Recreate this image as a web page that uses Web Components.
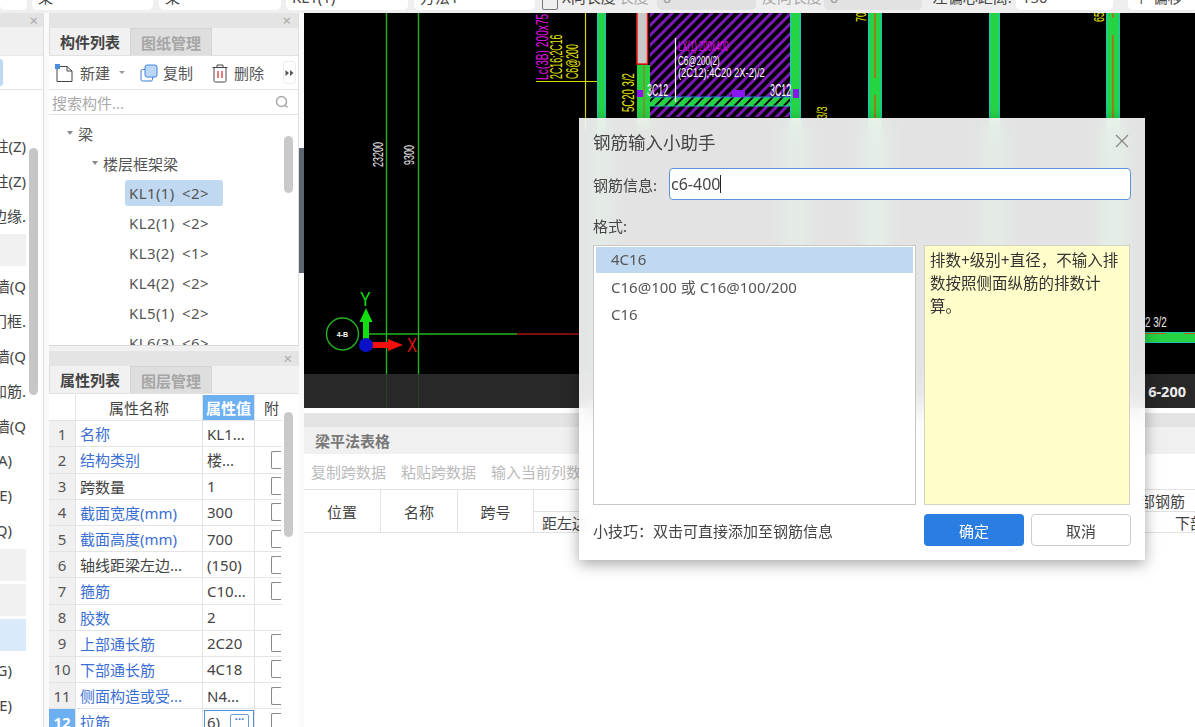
<!DOCTYPE html>
<html>
<head>
<meta charset="utf-8">
<style>
html,body{margin:0;padding:0;height:100%;overflow:hidden;background:#f1f1f1}
body{font-family:"Noto Sans","Noto Sans CJK SC",sans-serif;font-size:15px;color:#444}
</style>
</head>
<body>
<app-shell></app-shell>

<script>
const FONT = `"Noto Sans","Noto Sans CJK SC",sans-serif`

class AppShell extends HTMLElement{
    constructor(){
        super()
        const shadow = this.attachShadow({mode:"open"})
        shadow.innerHTML = `
        <style>
        :host{display:block;position:relative;width:1195px;height:727px;overflow:hidden;background:#f1f1f1;font-family:${FONT};font-size:15px}
        .main{display:grid;grid-template-columns:44px 5px 250px 5px 1fr;height:714px}
        .gap{background:#fafafa;position:relative}
        .handle{position:absolute;left:0;top:135px;width:5px;height:125px;background:#5d6670}
        .mid{display:flex;flex-direction:column;min-width:0}
        .right{display:flex;flex-direction:column;min-width:0;background:#fff}
        </style>
        <top-strip></top-strip>
        <div class="main">
            <side-list></side-list>
            <div class="gap"></div>
            <div class="mid">
                <part-panel></part-panel>
                <prop-panel></prop-panel>
            </div>
            <div class="gap"><div class="handle"></div></div>
            <div class="right">
                <cad-view></cad-view>
                <beam-table></beam-table>
            </div>
        </div>
        <rebar-dialog></rebar-dialog>
        `
    }
}

class TopStrip extends HTMLElement{
    constructor(){
        super()
        const shadow = this.attachShadow({mode:"open"})
        shadow.innerHTML = `
        <style>
        :host{display:flex;height:13px;background:#efefef;overflow:hidden;color:#444;align-items:flex-end;box-sizing:border-box;padding-bottom:3px}
        .box{background:#fff;height:22px;border-radius:0 0 5px 5px;flex:none;box-sizing:border-box;padding:0 6px 5px;display:flex;align-items:flex-end;white-space:nowrap;line-height:15px;overflow:hidden}
        .off{background:#e2e2e2;color:#999}
        .t{background:none;padding:0 0 5px}
        .chk{width:16px;height:14px;border:1px solid #777;border-radius:2px;flex:none;box-sizing:border-box}
        </style>
        <div class="box" style="width:27px"></div>
        <div class="box" style="width:121px;margin-left:5px">梁</div>
        <div class="box" style="width:122px;margin-left:6px">梁</div>
        <div class="box" style="width:122px;margin-left:5px">KL1(1)</div>
        <div class="box" style="width:121px;margin-left:6px">方法1</div>
        <div class="chk" style="margin-left:7px"></div>
        <div class="box t" style="margin-left:4px">X向长度</div>
        <div class="box t" style="margin-left:3px;color:#aaa;width:38px">长度</div>
        <div class="box off" style="width:99px">0</div>
        <div class="box t" style="margin-left:6px;color:#aaa;width:62px">反向长度</div>
        <div class="box off" style="width:98px">0</div>
        <div class="box t" style="margin-left:11px;width:83px">左偏心距离:</div>
        <div class="box" style="width:97px">150</div>
        <div class="box" style="width:70px;margin-left:15px">↑ 偏移</div>
        `
    }
}

class SideList extends HTMLElement{
    constructor(){
        super()
        const shadow = this.attachShadow({mode:"open"})
        const rows = [
            ["柱(Z)",""],["柱(Z)",""],["边缘.",""],["","g"],["墙(Q",""],["门框.",""],["墙(Q",""],["加筋.",""],
            ["墙(Q",""],["A)","s"],["E)","s"],["Q)","s"],["","g"],["","g"],["","b"],["G)","s"],["E)","s"]
        ]
        shadow.innerHTML = `
        <style>
        :host{display:flex;flex-direction:column;background:#fff;min-width:0;position:relative;border-right:1px solid #ddd;box-sizing:border-box;overflow:hidden}
        .head{height:14px;background:#e3e3e3;display:flex;justify-content:flex-end;align-items:center;padding-right:5px;flex:none;color:#aaa;line-height:14px}
        .gap1{height:28px;background:#f1f1f1;flex:none;border-bottom:1px solid #e8e8e8}
        .bar{height:34px;flex:none;border-bottom:1px solid #e3e3e3;box-sizing:border-box;padding-top:3px}
        .sel{width:3px;height:27px;background:#bfd9f2;border-radius:0 3px 3px 0}
        .rows{padding-top:39px;width:26px;display:flex;flex-direction:column;gap:3px}
        .row{height:32px;display:flex;justify-content:flex-end;align-items:center;white-space:nowrap;overflow:hidden;color:#444;flex:none}
        .s{padding-right:14px;box-sizing:border-box}
        .g{background:#f1f1f1}
        .b{background:#dbeafb}
        .sb{position:absolute;left:29px;top:135px;width:9px;height:247px;background:#c6c6c6;border-radius:5px}
        </style>
        <div class="head">×</div>
        <div class="gap1"></div>
        <div class="bar"><div class="sel"></div></div>
        <div class="rows">${rows.map(r=>`<div class="row ${r[1]}">${r[0]}</div>`).join("")}</div>
        <div class="sb"></div>
        `
    }
}

class PanelTabs extends HTMLElement{
    constructor(){
        super()
        this.attachShadow({mode:"open"})
    }
    connectedCallback(){
        this.shadowRoot.innerHTML = `
        <style>
        :host{display:block;flex:none}
        .head{height:15px;background:#e4e4e4;display:flex;justify-content:flex-end;align-items:center;padding-right:7px;color:#aaa;line-height:15px}
        .tabs{display:flex;height:28px;background:#f1f1f1;box-sizing:border-box;border-bottom:1px solid #e2e2e2;font-weight:bold}
        .tab{width:81px;display:flex;align-items:center;justify-content:center;box-sizing:border-box;color:#444;border-left:1px solid #ddd}
        .other{width:82px;background:#dedede;color:#a6a6a6;border:1px solid #d4d4d4;border-bottom:none}
        </style>
        <div class="head">×</div>
        <div class="tabs"><div class="tab">${this.getAttribute("active")}</div><div class="tab other">${this.getAttribute("other")}</div></div>
        `
    }
}

class PartPanel extends HTMLElement{
    constructor(){
        super()
        const shadow = this.attachShadow({mode:"open"})
        const kl = ["KL1(1) &lt;2&gt;","KL2(1) &lt;2&gt;","KL3(2) &lt;1&gt;","KL4(2) &lt;2&gt;","KL5(1) &lt;2&gt;","KL6(3) &lt;6&gt;"]
        shadow.innerHTML = `
        <style>
        :host{display:flex;flex-direction:column;height:333px;flex:none;background:#fff;box-sizing:border-box;border-bottom:1px solid #d8d8d8;border-right:1px solid #e0e0e0;overflow:hidden;color:#555;position:relative}
        .tools{height:34px;display:flex;align-items:center;border-bottom:1px solid #e4e4e4;box-sizing:border-box;flex:none;padding-left:5px;position:relative}
        .tool{display:flex;align-items:center;color:#555}
        .tool svg{flex:none}
        .more{position:absolute;right:2px;top:5px;width:13px;height:23px;border:1px solid #eee;border-radius:3px;box-sizing:border-box;display:flex;align-items:center;justify-content:center}
        .search{height:25px;display:flex;align-items:center;justify-content:space-between;padding:0 9px 0 3px;color:#aaa;border-bottom:1px solid #e4e4e4;box-sizing:border-box;flex:none}
        .tree{flex:1;position:relative;overflow:hidden;padding-top:3px}
        .node{height:30px;display:flex;align-items:center;color:#555;white-space:nowrap;flex:none}
        .arrow{width:0;height:0;border-left:3.5px solid transparent;border-right:3.5px solid transparent;border-top:4px solid #888;margin-right:5px}
        .leaf{margin-left:76px;padding:0 14px 0 4px;height:26px;line-height:26px;display:inline-block;border-radius:3px;letter-spacing:.4px;word-spacing:3px}
        .on{background:#c0d8f0}
        .sb{position:absolute;left:235px;top:21px;width:9px;height:57px;background:#c9c9c9;border-radius:5px}
        </style>
        <panel-tabs active="构件列表" other="图纸管理"></panel-tabs>
        <div class="tools">
            <div class="tool" style="width:74px">
                <svg width="20" height="20" viewBox="0 0 20 20" style="margin-right:6px"><path d="M3 3.500H13L18 8V18.500H3Z" fill="#fff" stroke="#444"/><path d="M13 3.500V8H18" fill="none" stroke="#444"/><rect x="1" y="1" width="5" height="5" fill="#4a8ee0"/></svg>
                <span>新建</span><span style="width:0;height:0;border-left:3px solid transparent;border-right:3px solid transparent;border-top:3px solid #999;margin-left:9px"></span>
            </div>
            <div class="tool" style="width:72px;margin-left:11px">
                <svg width="20" height="20" viewBox="0 0 20 20" style="margin-right:4px"><path d="M6 6.500H3.500A1.500 1.500 0 0 0 2 8V16.500A1.500 1.500 0 0 0 3.500 18H12A1.500 1.500 0 0 0 13.500 16.500V14" fill="none" stroke="#3d7fd6"/><rect x="6" y="2" width="12" height="12" rx="2" fill="#bcd6f5" stroke="#3f86e0"/></svg>
                <span>复制</span>
            </div>
            <div class="tool">
                <svg width="18" height="20" viewBox="0 0 18 20" style="margin-right:5px"><path d="M3 5V17.500A1.500 1.500 0 0 0 4.500 19H13.500A1.500 1.500 0 0 0 15 17.500V5" fill="none" stroke="#444"/><path d="M1.500 4.500H16.500M6 4.500V2H12V4.500" fill="none" stroke="#444"/><path d="M7 8V15M11 8V15" stroke="#d33" stroke-width="1.300"/></svg>
                <span>删除</span>
            </div>
            <div class="more"><svg width="9" height="8" viewBox="0 0 9 8"><path d="M0.500 1L4 4L0.500 7ZM5 1L8.500 4L5 7Z" fill="#555"/></svg></div>
        </div>
        <div class="search"><span>搜索构件...</span>
            <svg width="14" height="14" viewBox="0 0 14 14"><circle cx="6.500" cy="6.500" r="5" fill="none" stroke="#aaa" stroke-width="1.500"/><path d="M10 10L12.500 12.500" stroke="#aaa" stroke-width="1.500"/></svg>
        </div>
        <div class="tree">
            <div class="node" style="padding-left:18px"><span class="arrow"></span>梁</div>
            <div class="node" style="padding-left:43px"><span class="arrow"></span>楼层框架梁</div>
            ${kl.map((t,i)=>`<div class="node"><span class="leaf ${i==0?"on":""}">${t}</span></div>`).join("")}
            <div class="sb"></div>
        </div>
        `
    }
}

class PropPanel extends HTMLElement{
    constructor(){
        super()
        const shadow = this.attachShadow({mode:"open"})
        const rows = [
            ["名称","KL1...",1,0],["结构类别","楼...",1,1],["跨数量","1",0,1],["截面宽度(mm)","300",1,1],
            ["截面高度(mm)","700",1,1],["轴线距梁左边...","(150)",0,1],["箍筋","C10...",1,1],["胶数","2",1,0],
            ["上部通长筋","2C20",1,1],["下部通长筋","4C18",1,1],["侧面构造或受...","N4...",1,1],["拉筋","6)",1,1]
        ]
        shadow.innerHTML = `
        <style>
        :host{display:block;flex:1;background:#fff;position:relative;overflow:hidden;margin-top:5px;color:#444}
        .grid{display:grid;grid-template-columns:27px 127px 52px 27px;grid-auto-rows:26.200px;margin-top:1px}
        .c{box-sizing:border-box;border-right:1px solid #e4e4e4;border-bottom:1px solid #e4e4e4;display:flex;align-items:center;padding-left:4px;white-space:nowrap;overflow:hidden}
        .n{background:#f0f0f0;justify-content:center;padding:0;color:#555}
        .name{color:#3b6fd4}
        .plain{color:#444}
        .hn{justify-content:center;padding:0}
        .hv{background:#6db0f2;color:#fff;justify-content:center;padding:0;font-weight:bold}
        .ha{border-right:none;padding-left:9px}
        .a{border-right:none;padding-left:16px}
        .box{width:10px;height:18px;border:1px solid #888;border-right:none;box-sizing:border-box;border-radius:2px 0 0 2px;background:#fff}
        .sn{background:#6db0f2;color:#fff;font-weight:bold}
        .sv{outline:1.500px solid #4d8fdc;outline-offset:-2px;justify-content:space-between;padding-right:5px}
        .dots{width:19px;height:15px;border:1px solid #6e9bd8;border-radius:2px;color:#3b6fd4;font-size:11px;line-height:8px;text-align:center;box-sizing:border-box;font-weight:bold}
        .sb{position:absolute;left:235px;top:61px;width:9px;height:125px;background:#c9c9c9;border-radius:5px}
        </style>
        <panel-tabs active="属性列表" other="图层管理"></panel-tabs>
        <div class="grid">
            <div class="c"></div><div class="c hn">属性名称</div><div class="c hv">属性值</div><div class="c ha">附</div>
            ${rows.map((r,i)=>{
                const last = i==11
                return `<div class="c n ${last?"sn":""}">${i+1}</div>
                <div class="c name ${r[2]?"":"plain"}">${r[0]}</div>
                <div class="c ${last?"sv":""}">${r[1]}${last?`<span class="dots">···</span>`:""}</div>
                <div class="c a">${r[3]?`<div class="box"></div>`:""}</div>`
            }).join("")}
        </div>
        <div class="sb"></div>
        `
    }
}

class CadView extends HTMLElement{
    constructor(){
        super()
        const shadow = this.attachShadow({mode:"open"})
        // drawing coords are page x minus 304, page y minus 13
        const col = (x,w)=>`<rect x="${x}" y="0" width="${w}" height="362" fill="#26d443"/><rect x="${x}" y="0" width="1.500" height="362" fill="#1cc8a8"/><rect x="${x+w-1.500}" y="0" width="1.500" height="362" fill="#1cc8a8"/>`
        const vt = (x,y,t,fill,size,sx=.6)=>`<text transform="translate(${x} ${y}) rotate(-90) scale(${sx} 1)" fill="${fill}" font-size="${size}" font-family="Liberation Sans">${t}</text>`
        const ht = (x,y,t,fill,size,sx)=>`<text transform="translate(${x} ${y}) scale(${sx} 1)" fill="${fill}" font-size="${size}" font-family="Liberation Sans">${t}</text>`
        shadow.innerHTML = `
        <style>
        :host{display:block;height:395px;flex:none;background:#000;position:relative;overflow:hidden}
        svg{display:block;position:absolute;left:0;top:0}
        .status{position:absolute;left:0;right:0;top:361px;height:34px;background:rgba(45,45,45,.88);color:#eee;font:bold 14.500px "Noto Sans",sans-serif;line-height:34px;text-align:right;padding-right:9px;box-sizing:border-box}
        </style>
        <svg width="891" height="395" viewBox="0 0 891 395">
            <defs>
                <pattern id="hatch" width="7" height="7" patternUnits="userSpaceOnUse" patternTransform="rotate(45)">
                    <rect width="3" height="7" fill="#7d18b8"/>
                </pattern>
                <pattern id="hatchg" width="7" height="7" patternUnits="userSpaceOnUse" patternTransform="rotate(45)">
                    <rect width="5" height="7" fill="#26d443"/>
                </pattern>
            </defs>
            <path d="M82.500 0V395M114.500 0V395" stroke="#22b422" stroke-width="1.400"/>
            <path d="M63 321H213" stroke="#22b422" stroke-width="1.400"/>
            <path d="M213 321H290" stroke="#a81414" stroke-width="1.400"/>
            <circle cx="38.500" cy="321" r="16" fill="none" stroke="#22b422" stroke-width="1.400"/>
            <text x="38.500" y="324" text-anchor="middle" fill="#fff" font-size="7" font-family="Liberation Sans" font-weight="bold">4-B</text>
            ${vt(79,154,"23200","#e8e8e8",15)}
            ${vt(110,152,"9300","#e8e8e8",15)}
            <path d="M59 331V309H55.500L62 295L68.500 309H65V331Z" fill="#10e010"/>
            ${ht(56,293,"Y","#10e010",20,.8)}
            <path d="M66 329H84V326L99 332L84 338V335H66Z" fill="#f01010"/>
            <circle cx="62" cy="332" r="7" fill="#0a10c8"/>
            ${ht(103,339,"X","#e01010",20,.75)}

            <rect x="346" y="0" width="140" height="104" fill="url(#hatch)"/>
            <rect x="346" y="84" width="140" height="9" fill="url(#hatchg)"/>
            <path d="M346 84H486" stroke="#2a7cf0" stroke-width="1"/>
            <path d="M346 93H486" stroke="#1cc8a8" stroke-width="1"/>
            <rect x="333" y="-2" width="10.500" height="53" fill="#c9c9c9" stroke="#ee1c1c" stroke-width="1.500"/>
            <rect x="333" y="52" width="13" height="65" fill="#26d443"/>
            <path d="M340 52V117" stroke="#c0601a" stroke-width="1"/>
            <path d="M281.500 0V117" stroke="#d8d800" stroke-width="1.200"/>
            <path d="M232 68.500H300" stroke="#e0e000" stroke-width="1.200"/>
            <path d="M371.500 25V89" stroke="#fff" stroke-width="1.200"/>
            ${col(293,9)}
            ${col(486,11)}
            ${col(564,14)}
            ${col(685,11)}
            ${col(802,14)}
            <path d="M571 0V65M571 82V117M809 0V5M809 22V117" stroke="#c0601a" stroke-width="1.500"/>
            <rect x="333" y="77" width="6" height="7" fill="#8a17f0"/>
            <rect x="428" y="77" width="13" height="7" fill="#8a17f0"/>
            <rect x="489" y="76" width="6" height="9" fill="#8a17f0"/>
            ${vt(244,67,"Lc(3B) 200x75","#e010e0",17,.6)}
            ${vt(258,66,"2C16;2C16","#e8e800",16,.55)}
            ${vt(274,66,"C6@200","#e8e800",16,.55)}
            ${vt(330,99,"5C20 3/2","#e8e800",16,.6)}
            ${vt(562,9,"7000","#e8e800",15)}
            ${vt(800,9,"650","#e8e800",15)}
            ${vt(523,106,"3/3","#e8e800",15)}
            ${ht(374,38,"LX(1) 200x400","#e010e0",14,.55)}
            ${ht(374,52,"C6@200(2)","#fff",13,.62)}
            ${ht(374,64,"(2C12);4C20 2X-2)/2","#fff",13,.72)}
            ${ht(343,83,"3C12","#fff",16,.55)}
            ${ht(466,83,"3C12","#fff",16,.55)}
            <rect x="841" y="319" width="50" height="11" fill="#26d443"/>
            <path d="M841 319.500H891" stroke="#1cc8a8"/>
            <path d="M841 329.500H891" stroke="#1cc8a8"/>
            <path d="M841 320.500H862M880 320.500H891" stroke="#c0601a" stroke-width="1.200"/>
            ${ht(841,314,"2 3/2","#eee",14,.7)}
        </svg>
        <div class="status">6-200</div>
        `
    }
}

class BeamTable extends HTMLElement{
    constructor(){
        super()
        const shadow = this.attachShadow({mode:"open"})
        shadow.innerHTML = `
        <style>
        :host{display:flex;flex-direction:column;flex:1;background:#fff;margin-top:5px;overflow:hidden;color:#444}
        .head{height:14px;background:#e4e4e4;flex:none}
        .title{height:27px;background:#f0f0f0;flex:none;display:flex;align-items:center;padding-left:11px;font-weight:bold;color:#777}
        .tools{height:36px;flex:none;display:flex;align-items:center;padding-left:7px;gap:15px;color:#bbb;white-space:nowrap;border-bottom:1px solid #e2e2e2;box-sizing:border-box}
        .thead{display:grid;grid-template-columns:77px 77px 76px 1fr;height:43px;border-bottom:1px solid #e2e2e2;box-sizing:border-box;flex:none}
        .h{border-right:1px solid #e2e2e2;display:flex;align-items:center;justify-content:center;box-sizing:border-box}
        .sub{position:relative;display:flex;flex-direction:column}
        .up{height:21px;border-bottom:1px solid #e2e2e2;display:flex;justify-content:flex-end;align-items:center;padding-right:10px;white-space:nowrap}
        .dn{flex:1;display:flex;justify-content:space-between;align-items:center;padding-left:8px;overflow:hidden;white-space:nowrap}
        .dn span:last-child{width:20px;overflow:hidden;flex:none}
        </style>
        <div class="head"></div>
        <div class="title">梁平法表格</div>
        <div class="tools"><span>复制跨数据</span><span>粘贴跨数据</span><span>输入当前列数据</span></div>
        <div class="thead">
            <div class="h">位置</div><div class="h">名称</div><div class="h">跨号</div>
            <div class="sub"><div class="up">下部钢筋</div><div class="dn"><span>距左边</span><span>下部</span></div></div>
        </div>
        `
    }
}

class RebarDialog extends HTMLElement{
    constructor(){
        super()
        const shadow = this.attachShadow({mode:"open"})
        shadow.innerHTML = `
        <style>
        :host{display:flex;flex-direction:column;position:absolute;left:579px;top:118px;width:566px;height:442px;box-sizing:border-box;padding:0 14px 14px;background:rgba(255,255,255,.89);-webkit-backdrop-filter:blur(11px);backdrop-filter:blur(11px);box-shadow:0 4px 14px rgba(0,0,0,.35);color:#444}
        .top{height:50px;display:flex;justify-content:space-between;align-items:center;flex:none;font-size:17.500px;padding-bottom:4px;box-sizing:border-box}
        .top svg{margin-right:2px}
        .info{display:flex;align-items:center;height:32px;flex:none}
        .info label{width:76px;flex:none}
        .input{flex:1;height:32px;background:#fff;border:1.500px solid #5b93dd;border-radius:4px;box-sizing:border-box;display:flex;align-items:center;padding-left:1px;font-size:16px}
        .caret{width:1px;height:18px;background:#222}
        .fmt{height:45px;display:flex;align-items:center;flex:none;padding-top:6px;box-sizing:border-box}
        .body{display:flex;gap:8px;height:260px;flex:none}
        .list{width:323px;background:#fff;border:1px solid #c8c8c8;box-sizing:border-box;padding:1px 2px}
        .item{height:26px;line-height:25px;padding-left:15px;margin-bottom:1.500px;color:#555}
        .on{background:#c0d8f0}
        .tip{width:206px;background:#fffdc9;border:1px solid #d4d4c4;box-sizing:border-box;padding:3px 5px;font-size:15.500px;line-height:23px;color:#333}
        .foot{display:flex;align-items:center;flex:1;padding-top:9px;box-sizing:border-box}
        .foot span{flex:1}
        .btn{width:100px;height:32px;border-radius:4px;display:flex;align-items:center;justify-content:center;box-sizing:border-box}
        .ok{background:#2a7de1;color:#fff;margin-right:7px}
        .no{background:#fff;border:1px solid #ccc;color:#444}
        </style>
        <div class="top"><span>钢筋输入小助手</span>
            <svg width="14" height="14" viewBox="0 0 14 14"><path d="M1 1L13 13M13 1L1 13" stroke="#888" stroke-width="1.200"/></svg>
        </div>
        <div class="info"><label>钢筋信息:</label><div class="input">c6-400<i class="caret"></i></div></div>
        <div class="fmt">格式:</div>
        <div class="body">
            <div class="list">
                <div class="item on">4C16</div>
                <div class="item">C16@100 或 C16@100/200</div>
                <div class="item">C16</div>
            </div>
            <div class="tip">排数+级别+直径，不输入排数按照侧面纵筋的排数计算。</div>
        </div>
        <div class="foot"><span>小技巧：双击可直接添加至钢筋信息</span><div class="btn ok">确定</div><div class="btn no">取消</div></div>
        `
    }
}

customElements.define("top-strip", TopStrip)
customElements.define("side-list", SideList)
customElements.define("panel-tabs", PanelTabs)
customElements.define("part-panel", PartPanel)
customElements.define("prop-panel", PropPanel)
customElements.define("cad-view", CadView)
customElements.define("beam-table", BeamTable)
customElements.define("rebar-dialog", RebarDialog)
customElements.define("app-shell", AppShell)
</script>
</body>
</html>
